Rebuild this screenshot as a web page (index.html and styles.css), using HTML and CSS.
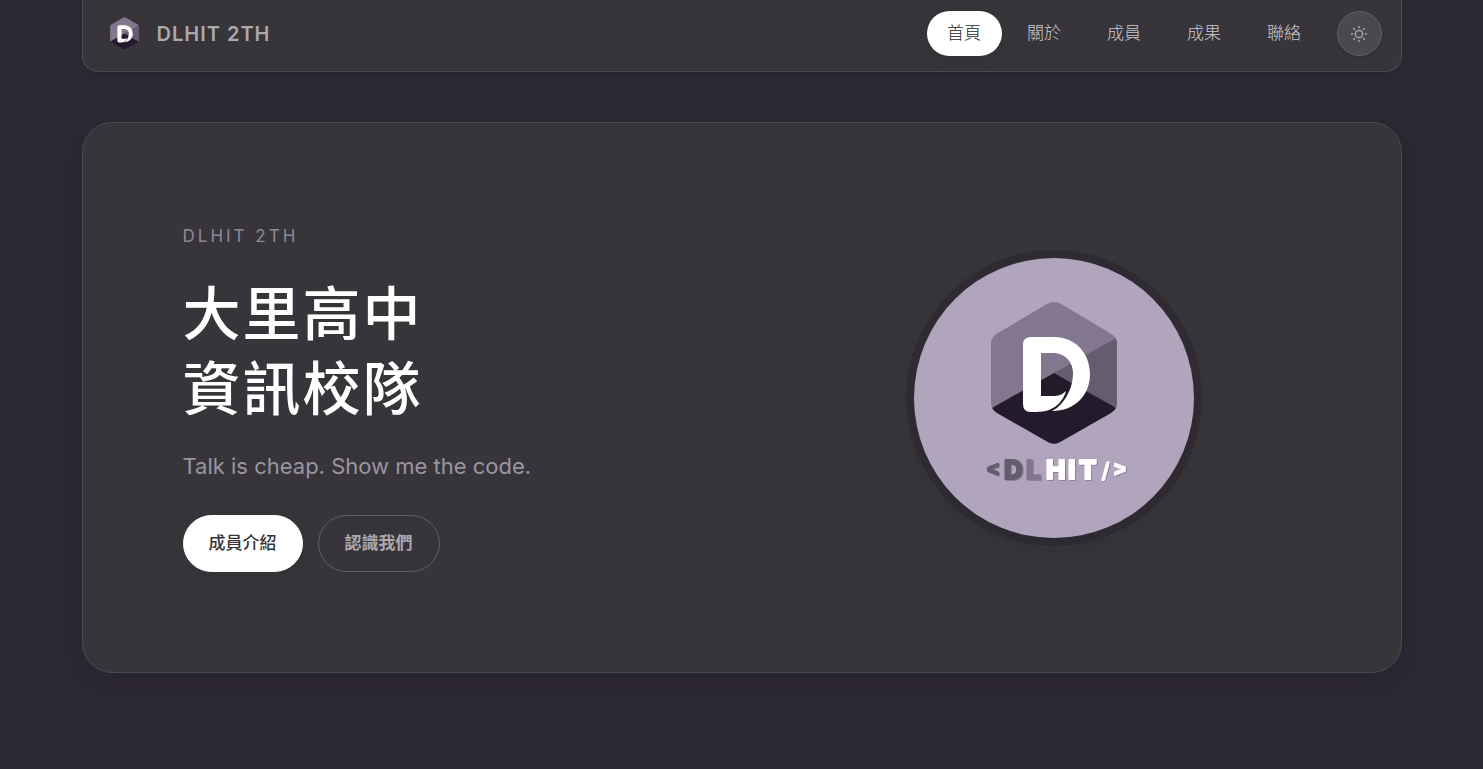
FILE: index.html
```html
<!DOCTYPE html>
<html lang="zh-Hant">
<head>
  <meta charset="UTF-8">
  <meta name="viewport" content="width=device-width, initial-scale=1.0">
  <title>DLHIT 2TH</title>
  <link rel="stylesheet" href="styles.css">
</head>
<body>

<header class="navbar">
  <a class="brand" href="#home">
    <svg class="brand-logo" viewBox="42 17 196 196" aria-hidden="true">
      <use href="#mark"/>
    </svg>
    <span>DLHIT 2TH</span>
  </a>
  <nav class="nav-links">
    <a class="active" href="#home">首頁</a>
    <a href="#about">關於</a>
    <a href="#members">成員</a>
    <a href="#works">成果</a>
    <a href="#contact">聯絡</a>
  </nav>
  <button class="theme-toggle" type="button" aria-label="切換主題">
    <svg viewBox="0 0 16 16" aria-hidden="true">
      <circle cx="8" cy="8" r="3.6"/>
      <path d="M8 0v2.2M8 13.8V16M0 8h2.2M13.8 8H16M2.3 2.3l1.6 1.6M12.1 12.1l1.6 1.6M2.3 13.7l1.6-1.6M12.1 3.9l1.6-1.6"/>
    </svg>
  </button>
</header>

<main class="hero" id="home">
  <div class="hero-text">
    <p class="eyebrow">DLHIT 2TH</p>
    <h1>大里高中<br>資訊校隊</h1>
    <p class="lead">Talk is cheap. Show me the code.</p>
    <div class="actions">
      <a class="btn btn-primary" href="#members">成員介紹</a>
      <a class="btn btn-outline" href="#about">認識我們</a>
    </div>
  </div>

  <div class="hero-logo">
    <svg viewBox="0 0 280 280" role="img" aria-label="DLHIT">
      <defs>
        <clipPath id="hex">
          <path d="M133 46Q140 42 147 46L196 75Q203 79 203 86V145Q203 151 197 155L147 183.5Q140 188 133 183.5L83 155Q77 151 77 145V86Q77 79 84 75Z"/>
        </clipPath>
        <g id="mark">
          <g clip-path="url(#hex)">
            <rect x="77" y="42" width="126" height="146" fill="#83768f"/>
            <path d="M140 115L204 79V152Z" fill="#655c6f"/>
            <path d="M140 115L76 151V190H204V151Z" fill="#231a2c"/>
          </g>
          <path d="M117 79H140C162 79 176 96 176 116C176 137 161 153 138 153C147 149 159 134 159 115C159 104 151 95 139 95H127V138H139C145 138 149 136 152 133C149 143 141 154 122 154H117Q109 154 109 146V87Q109 79 117 79Z" fill="#fff"/>
        </g>
      </defs>
      <use href="#mark"/>
      <text class="wordmark" y="221">
        <tspan class="dark sign" x="73" y="218">&lt;</tspan><tspan class="dark" x="90" y="221">D</tspan><tspan class="mid" x="112">L</tspan><tspan x="132">H</tspan><tspan x="154">I</tspan><tspan x="165">T</tspan><tspan class="slash" x="188" y="220">/</tspan><tspan class="sign" x="200" y="218">&gt;</tspan>
      </text>
    </svg>
  </div>
</main>

</body>
</html>
```
FILE: styles.css
```css
* { box-sizing: border-box; }
body {
  margin: 0;
  padding: 0 20px 96px;
  background: #2c2834;
  color: #aca8b0;
  font-family: Inter, "Noto Sans CJK TC", sans-serif;
}
a { color: inherit; text-decoration: none; }

.navbar {
  display: flex;
  align-items: center;
  max-width: 1320px;
  margin: 0 auto 50px;
  padding: 11px 19px 15px;
  background: #373539;
  border: 1px solid #4b4850;
  border-top: none;
  border-radius: 0 0 16px 16px;
  box-shadow: 0 2px 6px rgba(0,0,0,0.08);
}
.brand {
  display: flex;
  align-items: center;
  gap: 10px;
  margin-right: auto;
  font-size: 20px;
  font-weight: 600;
  letter-spacing: 1px;
}
.brand-logo { width: 45px; height: 45px; }
.nav-links {
  display: flex;
  gap: 5px;
  margin-right: 15px;
}
.nav-links a {
  min-width: 75px;
  border-radius: 24px;
  color: #cbc7cf;
  font-size: 17px;
  font-weight: 300;
  line-height: 45px;
  text-align: center;
}
.nav-links .active {
  background: #fff;
  color: #231f27;
  box-shadow: 0 5px 12px rgba(40,35,50,0.2);
}
.theme-toggle {
  display: grid;
  place-items: center;
  width: 45px;
  height: 45px;
  padding: 0;
  border: 1px solid #625d6b;
  border-radius: 50%;
  background: #4b484f;
  box-shadow: 0 2px 4px rgba(0,0,0,0.12);
  cursor: pointer;
}
.theme-toggle svg {
  width: 16px;
  height: 16px;
  fill: none;
  stroke: #a8a1b3;
  stroke-width: 1.5;
}

.hero {
  display: grid;
  grid-template-columns: 1.1fr 0.9fr;
  gap: 24px;
  align-items: center;
  max-width: 1320px;
  margin: 0 auto;
  padding: 100px;
  background: #373539;
  border: 1px solid #4b4850;
  border-radius: 30px;
  box-shadow: 0 10px 24px rgba(20,15,30,0.14);
}
.eyebrow {
  margin: 0 0 28px;
  color: #8f8799;
  font-size: 17px;
  line-height: 26px;
  letter-spacing: 3px;
}
h1 {
  margin: 0 0 21px;
  color: #fff;
  font-size: 58px;
  font-weight: 500;
  line-height: 75px;
  letter-spacing: 2px;
}
.lead {
  margin: 0 0 31px;
  color: #9b94a4;
  font-size: 22px;
  line-height: 36px;
}
.actions {
  display: flex;
  gap: 15px;
}
.btn {
  padding: 0 25px;
  border: 1px solid transparent;
  border-radius: 29px;
  font-size: 17px;
  font-weight: 500;
  line-height: 55px;
}
.btn-primary {
  background: #fff;
  color: #373539;
  border-color: #fff;
  box-shadow: 0 5px 12px rgba(40,35,50,0.2);
}
.btn-outline {
  padding: 0 26px;
  border-color: #625d6b;
  font-weight: 600;
}

.hero-logo {
  display: grid;
  place-items: center;
}
.hero-logo > svg {
  width: 280px;
  height: 280px;
  border-radius: 50%;
  background: #b1a4bd;
  box-shadow: 0 0 0 8px rgba(30,25,35,0.3), 0 12px 20px rgba(40,35,50,0.25);
}
.wordmark {
  font-family: Inter, sans-serif;
  font-size: 26px;
  font-weight: 800;
  fill: #fff;
  stroke: #fff;
  stroke-width: 2;
  stroke-linejoin: round;
  filter: drop-shadow(1px 1px 0 rgba(90,80,100,0.4));
}
.wordmark .sign {
  font-family: "Liberation Mono", monospace;
  font-size: 20px;
}
.wordmark .slash {
  font-size: 20px;
  font-weight: 400;
}
.wordmark .dark { fill: #655c6f; stroke: #655c6f; }
.wordmark .mid { fill: #83768f; stroke: #83768f; }
```
